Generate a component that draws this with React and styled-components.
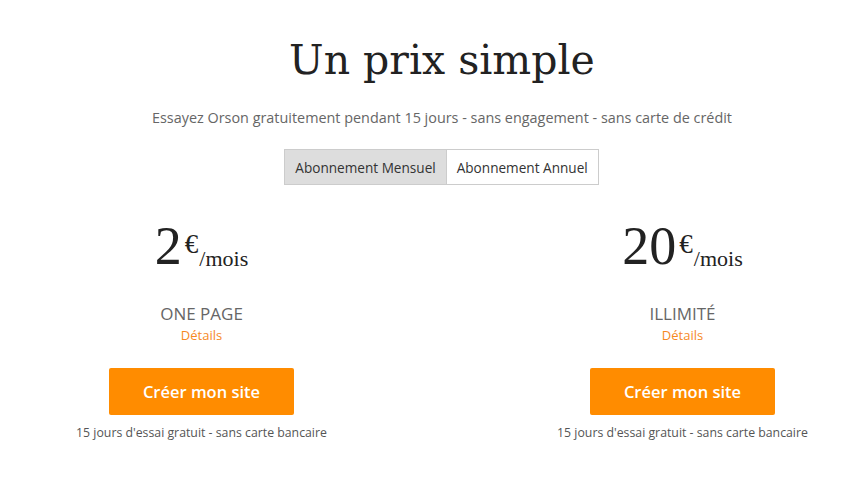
import React, { useState } from "react";
import styled, { createGlobalStyle } from "styled-components";

const GlobalStyle = createGlobalStyle`
  body {
    margin: 0;
    background: #ffffff;
    font-family: "Open Sans", "Liberation Sans", sans-serif;
  }
`;

const plans = [
  { price: "2", name: "ONE PAGE" },
  { price: "20", name: "ILLIMITÉ" },
];

const App = () => {
  const [period, setPeriod] = useState("mensuel");

  return (
    <>
      <GlobalStyle />
      <Wrapper>
        <Title>Un prix simple</Title>
        <Subtitle>
          Essayez Orson gratuitement pendant 15 jours - sans engagement - sans
          carte de crédit
        </Subtitle>
        <Toggle>
          <ToggleButton
            active={period === "mensuel"}
            onClick={() => setPeriod("mensuel")}
          >
            Abonnement Mensuel
          </ToggleButton>
          <ToggleButton
            active={period === "annuel"}
            onClick={() => setPeriod("annuel")}
          >
            Abonnement Annuel
          </ToggleButton>
        </Toggle>
        <Plans>
          {plans.map((plan) => (
            <Plan key={plan.name}>
              <Price>
                <Amount>{plan.price}</Amount>
                <Currency>€</Currency>
                <Per>/mois</Per>
              </Price>
              <PlanName>{plan.name}</PlanName>
              <Details href="#">Détails</Details>
              <Button>Créer mon site</Button>
              <Note>15 jours d'essai gratuit - sans carte bancaire</Note>
            </Plan>
          ))}
        </Plans>
      </Wrapper>
    </>
  );
};

const Wrapper = styled.div`
  display: flex;
  flex-direction: column;
  align-items: center;
  padding: 30px 0 40px 30px;
`;

const Title = styled.h1`
  margin: 0;
  font-family: "DejaVu Serif", "Liberation Serif", serif;
  font-weight: normal;
  font-size: 41px;
  line-height: 60px;
  color: #222;
`;

const Subtitle = styled.p`
  margin: 18px 0 0;
  font-size: 14.4px;
  line-height: 20px;
  color: #666;
`;

const Toggle = styled.div`
  display: flex;
  margin-top: 21px;
`;

const ToggleButton = styled.button`
  height: 36px;
  padding: 0 10px;
  border: 1px solid #ccc;
  margin-left: -1px;
  background: ${(p) => (p.active ? "#dddddd" : "#ffffff")};
  font-family: "Open Sans", "Liberation Sans", sans-serif;
  font-size: 13.6px;
  color: #333;
  cursor: pointer;
`;

const Plans = styled.div`
  display: grid;
  grid-template-columns: 1fr 1fr;
  column-gap: 138px;
  width: 100%;
  margin-top: 34px;
`;

const Plan = styled.div`
  display: flex;
  flex-direction: column;
  align-items: center;
`;

const Price = styled.div`
  display: flex;
  align-items: flex-start;
  height: 64px;
  font-family: "Liberation Serif", serif;
  color: #222;
`;

const Amount = styled.span`
  font-size: 54px;
  line-height: 54px;
`;

const Currency = styled.span`
  margin: 12px 0 0 3px;
  font-size: 27px;
  line-height: 26px;
`;

const Per = styled.span`
  margin: 29px 0 0 1px;
  font-size: 22px;
  line-height: 22px;
`;

const PlanName = styled.div`
  margin-top: 19px;
  font-size: 17px;
  line-height: 24px;
  color: #666;
`;

const Details = styled.a`
  font-size: 13px;
  line-height: 18px;
  color: #f6891f;
  text-decoration: none;
`;

const Button = styled.button`
  margin-top: 24px;
  width: 185px;
  height: 47px;
  border: none;
  border-radius: 2px;
  background: #ff8c00;
  color: #fff;
  font-family: "Open Sans", "Liberation Sans", sans-serif;
  font-weight: 600;
  font-size: 16.5px;
  cursor: pointer;
`;

const Note = styled.p`
  margin: 9px 0 0;
  font-size: 12.3px;
  line-height: 18px;
  color: #555;
`;

export default App;
